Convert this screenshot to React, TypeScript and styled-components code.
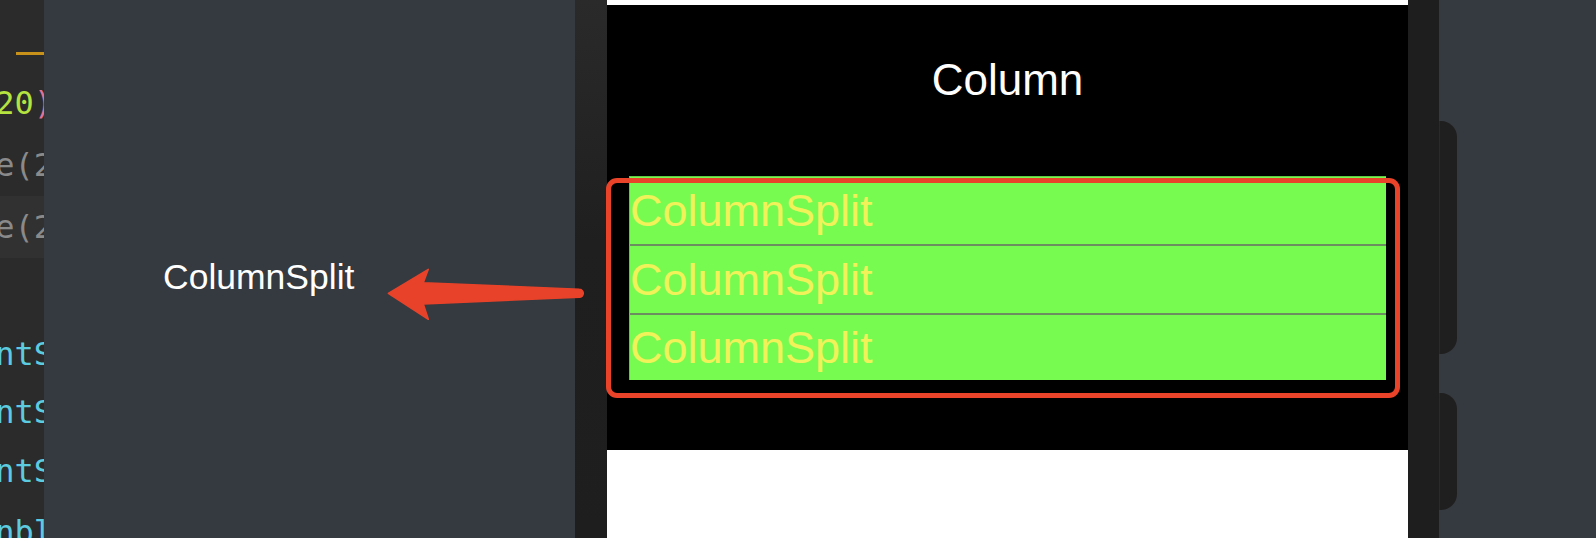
import React from "react";
import styled, { createGlobalStyle } from "styled-components";

const Global = createGlobalStyle`
  html, body { margin: 0; padding: 0; background: #353940; }
  body { overflow: hidden; }
`;

const Page = styled.div`
  position: relative;
  display: flex;
  width: 1596px;
  height: 538px;
  overflow: hidden;
  font-family: "Liberation Sans", Arial, sans-serif;
`;

/* ---------- code editor strip ---------- */
const CodeStrip = styled.div`
  width: 44px;
  flex: none;
  background: #2b2b2b;
  display: flex;
  flex-direction: column;
  overflow: hidden;
  font-family: "DejaVu Sans Mono", "Liberation Mono", monospace;
  font-size: 32px;
`;

const CodeSpacer = styled.div<{ $h: number }>`
  height: ${(p) => p.$h}px;
  flex: none;
  display: flex;
  flex-direction: column;
`;

const Squiggle = styled.div`
  margin: 52px 0 0 16px;
  height: 3px;
  background: #c8921a;
`;

const CodeLine = styled.div<{ $h: number; $hl?: boolean }>`
  height: ${(p) => p.$h}px;
  line-height: ${(p) => p.$h}px;
  flex: none;
  white-space: nowrap;
  text-indent: -24px;
  background: ${(p) => (p.$hl ? "#313131" : "transparent")};
`;

const Tok = styled.span<{ $c: string }>`
  color: ${(p) => p.$c};
`;

/* ---------- side panels ---------- */
const LeftPanel = styled.div`
  width: 531px;
  flex: none;
  background: #353940;
  padding: 260px 0 0 119px;
  box-sizing: border-box;
`;

const Label = styled.div`
  color: #ffffff;
  font-size: 35.5px;
  line-height: 35.5px;
`;

const BezelLeft = styled.div`
  width: 32px;
  flex: none;
  background: linear-gradient(180deg, #2a2a2a 0%, #1f1f1f 45%, #1e1e1e 100%);
`;

const BezelRight = styled.div`
  width: 31px;
  flex: none;
  background: #1e1e1e;
`;

const RightPanel = styled.div`
  flex: 1;
  background: #353940;
  display: flex;
  flex-direction: column;
  gap: 39px;
  padding-top: 121px;
  box-sizing: border-box;
`;

const SideButton = styled.div<{ $h: number }>`
  width: 17px;
  height: ${(p) => p.$h}px;
  background: #1f1f1f;
  border-left: 1px solid #2a2a2a;
  border-radius: 0 16px 16px 0;
`;

/* ---------- device screen ---------- */
const Screen = styled.div`
  width: 801px;
  flex: none;
  background: #ffffff;
  display: flex;
  flex-direction: column;
  padding-top: 5px;
  box-sizing: border-box;
`;

const Stage = styled.div`
  height: 445px;
  background: #000000;
  display: flex;
  flex-direction: column;
  align-items: center;
  padding-top: 53px;
  box-sizing: border-box;
`;

const Title = styled.div`
  color: #ffffff;
  font-size: 44px;
  line-height: 44px;
`;

const List = styled.div`
  align-self: stretch;
  margin: 74px 22px 0 22px;
  background: #78fb50;
  border-top: 1px solid #62c944;
  border-left: 1px solid #62c944;
  display: flex;
  flex-direction: column;
`;

const Row = styled.div`
  height: 67px;
  line-height: 67px;
  font-size: 45px;
  color: #f1f25a;
  white-space: nowrap;
  & + & {
    border-top: 2px solid #6c8d60;
  }
  &:last-child {
    height: 65px;
    line-height: 65px;
  }
`;

/* ---------- annotations ---------- */
const Highlight = styled.div`
  position: absolute;
  left: 606px;
  top: 178px;
  width: 794px;
  height: 220px;
  box-sizing: border-box;
  border: 5px solid #e9442a;
  border-radius: 11px;
  pointer-events: none;
`;

const Arrow = styled.svg`
  position: absolute;
  left: 380px;
  top: 260px;
  width: 210px;
  height: 70px;
  pointer-events: none;
`;

const fontLines = ["ontSize(20)", "ontSize(20)", "ontSize(20)", "unblock(t"];

export default function App() {
  return (
    <>
      <Global />
      <Page>
        <CodeStrip>
          <CodeSpacer $h={72}>
            <Squiggle />
          </CodeSpacer>
          <CodeLine $h={62}>
            <Tok $c="#b5e33f">(20</Tok>
            <Tok $c="#e0729c">)</Tok>
          </CodeLine>
          <CodeLine $h={62}>
            <Tok $c="#8a8a8a">ze(20)</Tok>
          </CodeLine>
          <CodeLine $h={62} $hl>
            <Tok $c="#8a8a8a">ze(20)</Tok>
          </CodeLine>
          <CodeSpacer $h={66} />
          <CodeLine $h={60}>
            <Tok $c="#5ccbe0">{fontLines[0]}</Tok>
          </CodeLine>
          <CodeLine $h={56}>
            <Tok $c="#5ccbe0">{fontLines[1]}</Tok>
          </CodeLine>
          <CodeLine $h={62}>
            <Tok $c="#5ccbe0">{fontLines[2]}</Tok>
          </CodeLine>
          <CodeLine $h={60}>
            <Tok $c="#5ccbe0">{fontLines[3]}</Tok>
          </CodeLine>
        </CodeStrip>

        <LeftPanel>
          <Label>ColumnSplit</Label>
        </LeftPanel>

        <BezelLeft />

        <Screen>
          <Stage>
            <Title>Column</Title>
            <List>
              <Row>ColumnSplit</Row>
              <Row>ColumnSplit</Row>
              <Row>ColumnSplit</Row>
            </List>
          </Stage>
        </Screen>

        <BezelRight />

        <RightPanel>
          <SideButton $h={233} />
          <SideButton $h={117} />
        </RightPanel>

        <Highlight />
        <Arrow viewBox="0 0 210 70">
          <path
            d="M8.3 33.3 L48.3 9.3 L43.3 22.7 L199.3 29.3 A4 4 0 0 1 199.3 37.3 L43.3 44 L48.3 59.3 Z"
            fill="#e8432a"
            stroke="#e8432a"
            strokeWidth="1.5"
            strokeLinejoin="round"
          />
        </Arrow>
      </Page>
    </>
  );
}
